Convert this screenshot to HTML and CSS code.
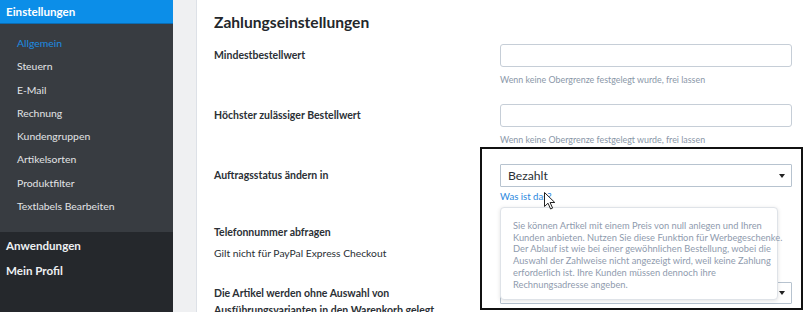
FILE: index.html
```html
<!DOCTYPE html>
<html lang="de">
<head>
    <meta charset="UTF-8">
    <meta name="viewport" content="width=device-width, initial-scale=1.0">
    <title>Zahlungseinstellungen</title>
    <link rel="stylesheet" href="styles.css">
</head>
<body>
    <div class="layout">
        <nav class="sidebar">
            <div class="sidebar-title">Einstellungen</div>
            <ul class="submenu">
                <li class="active">Allgemein</li>
                <li>Steuern</li>
                <li>E-Mail</li>
                <li>Rechnung</li>
                <li>Kundengruppen</li>
                <li>Artikelsorten</li>
                <li>Produktfilter</li>
                <li>Textlabels Bearbeiten</li>
            </ul>
            <ul class="mainmenu">
                <li>Anwendungen</li>
                <li>Mein Profil</li>
            </ul>
        </nav>

        <main class="content">
            <div class="panel">
                <h2>Zahlungseinstellungen</h2>

                <div class="field">
                    <div class="field-label">Mindestbestellwert</div>
                    <div class="field-control">
                        <input type="text" class="input">
                        <div class="help">Wenn keine Obergrenze festgelegt wurde, frei lassen</div>
                    </div>
                </div>

                <div class="field">
                    <div class="field-label">Höchster zulässiger Bestellwert</div>
                    <div class="field-control">
                        <input type="text" class="input">
                        <div class="help">Wenn keine Obergrenze festgelegt wurde, frei lassen</div>
                    </div>
                </div>

                <div class="field">
                    <div class="field-label">Auftragsstatus ändern in</div>
                    <div class="field-control">
                        <div class="select">
                            <span>Bezahlt</span>
                            <svg class="caret" width="6" height="4" viewBox="0 0 6 4"><path d="M0 0H6L3 4Z" fill="#222"/></svg>
                        </div>
                        <a class="help-link" href="#">Was ist das?</a>
                        <div class="popover">
                            Sie können Artikel mit einem Preis von null anlegen und Ihren<br>
                            Kunden anbieten. Nutzen Sie diese Funktion für Werbegeschenke.<br>
                            Der Ablauf ist wie bei einer gewöhnlichen Bestellung, wobei die<br>
                            Auswahl der Zahlweise nicht angezeigt wird, weil keine Zahlung<br>
                            erforderlich ist. Ihre Kunden müssen dennoch ihre<br>
                            Rechnungsadresse angeben.
                        </div>
                        <svg class="cursor" width="12" height="18" viewBox="0 0 12 18">
                            <path d="M0.5 0.5V14.5L4 11.2L6.6 17L8.6 16.1L6.1 10.5H10.8Z" fill="#fff" stroke="#222" stroke-width="1"/>
                        </svg>
                    </div>
                </div>

                <div class="field field-phone">
                    <div class="field-label">
                        Telefonnummer abfragen
                        <div class="field-note">Gilt nicht für PayPal Express Checkout</div>
                    </div>
                    <div class="field-control"></div>
                </div>

                <div class="field">
                    <div class="field-label">Die Artikel werden ohne Auswahl von Ausführungsvarianten in den Warenkorb gelegt</div>
                    <div class="field-control">
                        <div class="select select-empty">
                            <svg class="caret" width="6" height="4" viewBox="0 0 6 4"><path d="M0 0H6L3 4Z" fill="#222"/></svg>
                        </div>
                    </div>
                </div>
            </div>
        </main>
    </div>

    <div class="highlight"></div>
</body>
</html>
```

FILE: styles.css
```css
body {
    margin: 0;
    font-family: Lato, "Open Sans", Arial, sans-serif;
    width: 803px;
    height: 312px;
    overflow: hidden;
    position: relative;
}

.layout {
    display: flex;
    height: 312px;
}

/* sidebar */
.sidebar {
    width: 173px;
    flex: none;
    background-color: #25282c;
    display: flex;
    flex-direction: column;
}

.sidebar ul {
    list-style: none;
    margin: 0;
    padding: 0;
}

.sidebar-title {
    height: 23px;
    line-height: 24px;
    padding-left: 6px;
    background-color: #0c8ee8;
    border-bottom: 1px solid #0b6cb2;
    color: #fff;
    font-weight: 700;
    font-size: 11.6px;
}

.submenu {
    background-color: #383c41;
    padding: 8px 0 14px !important;
}

.submenu li {
    padding-left: 17px;
    line-height: 23.3px;
    font-size: 10.4px;
    color: #e2e4e6;
}

.submenu li.active {
    color: #1d8ce2;
}

.mainmenu {
    padding-top: 1px !important;
}

.mainmenu li {
    padding-left: 6px;
    line-height: 25px;
    font-size: 11.6px;
    font-weight: 700;
    color: #eef0f2;
}

/* content */
.content {
    flex: 1;
    background-color: #eff0f2;
    padding-left: 23px;
}

.panel {
    height: 100%;
    background-color: #fff;
    border-left: 1px solid #dde1e7;
    padding-left: 17px;
}

.panel h2 {
    margin: 0;
    padding-top: 12px;
    line-height: 20px;
    font-size: 15.6px;
    font-weight: 700;
    color: #23272b;
    margin-bottom: 12px;
}

.field {
    display: flex;
    margin-bottom: 17px;
}

.field-phone {
    margin-bottom: 20px;
}

.field-label {
    width: 286px;
    flex: none;
    padding-top: 3px;
    padding-right: 20px;
    box-sizing: border-box;
    font-size: 10.5px;
    line-height: 17px;
    font-weight: 700;
    color: #2b3035;
}

.field-note {
    margin-top: 4px;
    font-size: 10.3px;
    font-weight: 400;
}

.field-control {
    width: 292px;
    position: relative;
}

.input {
    display: block;
    width: 100%;
    height: 23px;
    box-sizing: border-box;
    border: 1px solid #c6ced7;
    border-radius: 3px;
    background-color: #fff;
    margin: 0;
}

.help {
    margin-top: 6px;
    line-height: 14px;
    font-size: 8.9px;
    color: #8a97a8;
    white-space: nowrap;
}

.select {
    height: 23px;
    box-sizing: border-box;
    border: 1px solid #b7c3cf;
    border-radius: 1px;
    display: flex;
    align-items: center;
    justify-content: space-between;
    padding: 0 6px 0 7px;
    font-size: 12.2px;
    color: #2b3035;
}

.select-empty {
    height: 22px;
    justify-content: flex-end;
}

.caret {
    display: block;
}

.help-link {
    display: block;
    margin-top: 3px;
    line-height: 14px;
    font-size: 9.6px;
    color: #2a88de;
    text-decoration: none;
}

.popover {
    position: absolute;
    left: 0;
    top: 43px;
    width: 278px;
    height: 93px;
    box-sizing: border-box;
    padding: 12px 0 0 12px;
    background-color: #fff;
    border: 1px solid #dfe3e8;
    border-radius: 4px;
    box-shadow: 0 1px 4px rgba(0, 0, 0, 0.12);
    font-size: 9.3px;
    line-height: 11.7px;
    color: #8f9bae;
    white-space: nowrap;
    z-index: 2;
}

.cursor {
    position: absolute;
    left: 44px;
    top: 28px;
    z-index: 3;
}

.highlight {
    position: absolute;
    left: 480px;
    top: 147px;
    width: 323px;
    height: 163px;
    box-sizing: border-box;
    border: 2px solid #111;
    pointer-events: none;
}
```
